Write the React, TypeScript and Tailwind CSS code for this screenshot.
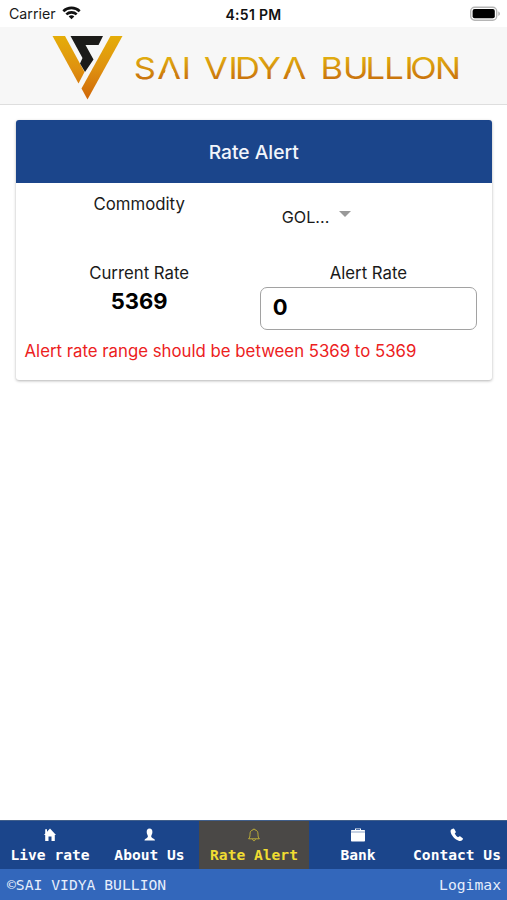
import type { ReactNode } from 'react';

function Logo() {
  return (
    <svg width="507" height="78" viewBox="0 27 507 78" className="block">
      <defs>
        <linearGradient id="mark" gradientUnits="userSpaceOnUse" x1="0" y1="36" x2="0" y2="100">
          <stop offset="0" stopColor="#e5ad08" />
          <stop offset="0.5" stopColor="#df9210" />
          <stop offset="1" stopColor="#cf6508" />
        </linearGradient>
        <linearGradient id="word" gradientUnits="userSpaceOnUse" x1="0" y1="57" x2="0" y2="80">
          <stop offset="0" stopColor="#e2ae10" />
          <stop offset="1" stopColor="#c8700c" />
        </linearGradient>
      </defs>
      <path d="M52.5 36H65L84.5 72L78.5 83.5Z" fill="url(#mark)" />
      <path d="M110.5 36H122.5L87.5 99.5L81.5 88.5Z" fill="url(#mark)" />
      <path d="M70.5 36H103L98.5 45H85.5L93.5 59.5L85 72L80 63.5L82.5 58Z" fill="#1c1b19" />
      <g transform="scale(1.15 1)" fill="url(#word)" fontFamily="Inter, sans-serif" fontSize="30" fontWeight="400">
        <text x="116.3 136.8 158" y="79.3">SAI</text>
        <text x="177.5 198.7 204.3 224 245.6" y="79.3">VIDYA</text>
        <text x="278.7 298.2 317.8 334.2 351.7 356.7 378.2" y="79.3">BULLION</text>
      </g>
      {/* The wordmark's A has no crossbar */}
      <path d="M166.3 69H172.7L175.2 74.5H163.8Z" fill="#f7f7f7" />
      <path d="M291.4 69H297.8L300.3 74.5H288.9Z" fill="#f7f7f7" />
    </svg>
  );
}

function Tab({ label, width, active, children }: { label: string; width: string; active?: boolean; children: ReactNode }) {
  return (
    <div className={`flex h-full shrink-0 flex-col items-center pt-[7px] ${width} ${active ? 'bg-[#4a4846] text-[#f0dc32]' : 'text-white'}`}>
      <svg width="16" height="14" viewBox="0 0 16 14" fill="currentColor">{children}</svg>
      <span className="mt-[3px] whitespace-pre text-[14.6px] leading-[20px] font-bold">{label}</span>
    </div>
  );
}

export default function App() {
  return (
    <div className="flex h-[900px] w-[507px] flex-col overflow-hidden bg-white font-[Inter,sans-serif] text-[#1a1a1a]">
      <div className="grid h-[27px] grid-cols-3 items-center px-[9px] text-[14.2px]">
        <div className="flex items-center gap-[6px]">
          <span>Carrier</span>
          <svg width="19" height="14" viewBox="0 0 19 14" fill="none" stroke="#111" strokeWidth="2.6" className="-mt-px">
            <path d="M1.3 5.2C5.8 .8 13.2 .8 17.7 5.2" />
            <path d="M4.3 8.4C7.2 5.7 11.8 5.7 14.7 8.4" />
            <path d="M9.5 13.2L6.7 10.4C8.3 9 10.7 9 12.3 10.4Z" fill="#111" stroke="none" />
          </svg>
        </div>
        <span className="whitespace-nowrap pt-px text-center text-[14px] font-semibold tracking-[0.3px] text-[#111]">4:51 PM</span>
        <div className="flex justify-end">
          <svg width="32" height="16" viewBox="0 0 32 16" className="-mr-[3px]">
            <rect x="1.7" y="1.2" width="26" height="13" rx="4" fill="#fff" stroke="#b5b5b5" strokeWidth="1.4" />
            <rect x="3.6" y="3.1" width="22.2" height="9.2" rx="2" fill="#000" />
            <path d="M29.4 5.5C31.3 6.2 31.3 9.2 29.4 9.9Z" fill="#aaa" />
          </svg>
        </div>
      </div>
      <header className="h-[78px] border-b border-[#dedede] bg-[#f7f7f7]">
        <Logo />
      </header>
      <main className="flex-1 pt-[15px] pr-[15px] pl-[15.5px]">
        <section className="h-[260px] overflow-hidden rounded-[3px] bg-white shadow-[0_1px_3px_rgba(0,0,0,0.3)]">
          <h1 className="flex h-[63px] items-center justify-center bg-[#1b458b] pt-px text-[19.2px] font-medium text-[#f2f5fb]">Rate Alert</h1>
          <div className="grid h-[79px] grid-cols-2 text-[16.8px] leading-[22px]">
            <span className="pt-[10px] pl-[9px] text-center">Commodity</span>
            <div className="flex items-start pt-[23px] pl-[28px]">
              <span className="text-[16.2px]">GOL...</span>
              <svg width="12" height="6" viewBox="0 0 12 6" className="mt-[5px] ml-[10px]"><path d="M0 0H12L6 6Z" fill="#999" /></svg>
            </div>
          </div>
          <div className="grid grid-cols-2 text-center text-[16.8px] leading-[22px]">
            <div className="pl-[9px]">
              <div>Current Rate</div>
              <div className="mt-[4px] text-[22px] leading-[26px] font-bold text-black">5369</div>
            </div>
            <div className="pr-[15px] pl-[6px]">
              <div>Alert Rate</div>
              <div className="mt-[3px] flex h-[43px] items-center rounded-[7px] border-[1.5px] border-[#a2a2a2] pb-[3px] pl-[12px] text-[22px] font-bold text-black">0</div>
            </div>
          </div>
          <p className="mt-[10px] whitespace-nowrap pl-[9px] text-[16.8px] leading-[22px] text-[#ec211d]">Alert rate range should be between 5369 to 5369</p>
        </section>
      </main>
      <footer className="font-['DejaVu_Sans_Mono',monospace]">
        <nav className="flex h-[49px] border-t border-[#415f8b] bg-[#1b458b]">
          <Tab label="Live rate" width="w-[100px]">
            <path d="M8 .5L14 7H12.8V13H9.5V8.5H6.5V13H3.2V7H2L3.2 5.6V1.2H5V3.7Z" />
          </Tab>
          <Tab label="About Us" width="w-[99px]">
            <path d="M7.5 .5C9.6 .5 10.4 2 10.4 4C10.4 6.2 9.2 7 9.2 8.6C9.2 10.4 13 10.6 13 12.6H2.5C2.5 10.6 5.9 10.4 5.9 8.6C5.9 7 4.7 6.2 4.7 4C4.7 2 5.5 .5 7.5 .5Z" />
          </Tab>
          <Tab label="Rate Alert" width="w-[110px]" active>
            <path d="M7.2 1.8C7.2 .6 8.8 .6 8.8 1.8C11.2 2.2 12 4 12 6.2C12 8.8 12.4 9.7 13.4 10.8H2.6C3.6 9.7 4 8.8 4 6.2C4 4 4.8 2.2 7.2 1.8ZM6.6 11.2C6.8 13.2 9.2 13.2 9.4 11.2" fill="none" stroke="currentColor" strokeOpacity=".8" strokeWidth=".85" />
          </Tab>
          <Tab label="Bank" width="w-[98px]">
            <path d="M5 2V.5H11V2H14.3Q15 2 15 2.7V3.8H1V2.7Q1 2 1.7 2ZM6 1.3V2H10V1.3ZM1 4.3H15V12.7Q15 13.5 14.2 13.5H1.8Q1 13.5 1 12.7Z" fillRule="evenodd" />
          </Tab>
          <Tab label="Contact Us" width="w-[100px]">
            <path d="M2.2 1.6L4.2 .6Q4.9 .4 5.3 1L6.8 3.7Q7 4.4 6.5 4.8L5.7 5.5Q6.8 7.8 9 9.2L10.1 8.4Q10.6 8 11.1 8.3L13.7 10.2Q14.2 10.7 13.9 11.3Q12.8 13.6 10.2 13C6 11.7 2 7.3 1.6 3.8Q1.5 2.2 2.2 1.6Z" />
          </Tab>
        </nav>
        <div className="flex h-[31px] items-center justify-between bg-[#3367bb] pt-px pr-[6px] pl-[7px] text-[14.7px] text-[#e6eefb]">
          <span>©SAI VIDYA BULLION</span>
          <span>Logimax</span>
        </div>
      </footer>
    </div>
  );
}
